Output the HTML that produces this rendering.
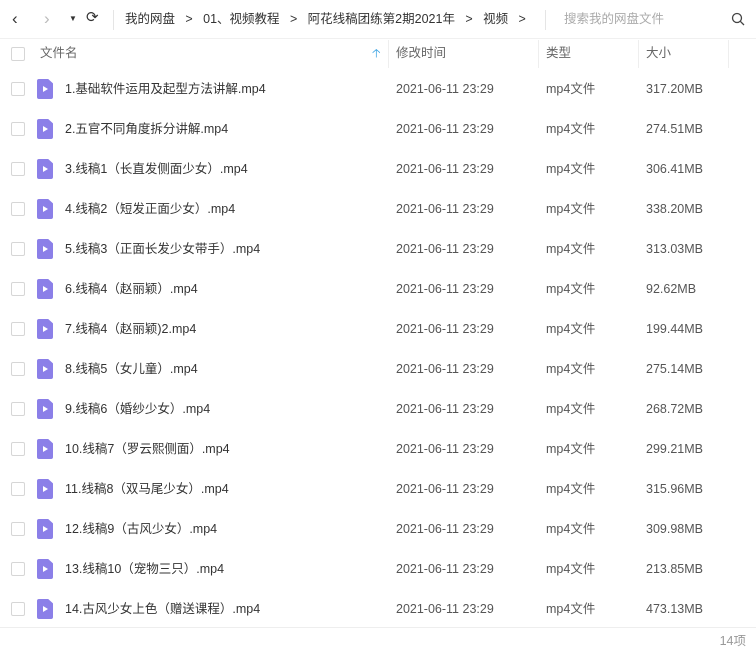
<!DOCTYPE html><html><head><meta charset="utf-8"><style>
body{margin:0;width:756px;height:660px;background:#fff;font-family:"Liberation Sans","Noto Sans CJK SC",sans-serif;color:#333;overflow:hidden;position:relative;font-size:12.5px}
.a{position:absolute;white-space:nowrap;line-height:16px}
.cb{position:absolute;left:11px;width:12px;height:12px;border:1px solid #d6d6d6;border-radius:2px;background:#fff}
.ic{position:absolute;left:37px;width:16px;height:20px;background:#8b7fe8;border-radius:2px;clip-path:polygon(0 0,70% 0,100% 22%,100% 100%,0 100%)}
.ic:after{content:"";position:absolute;left:6px;top:7px;border-left:5px solid #fff;border-top:3px solid transparent;border-bottom:3px solid transparent}
.g{color:#555}
</style></head><body>
<div class="a" style="left:12px;top:9px;font-size:17px;line-height:20px;color:#333">&#8249;</div>
<div class="a" style="left:44px;top:9px;font-size:17px;line-height:20px;color:#bbb">&#8250;</div>
<div class="a" style="left:69px;top:11px;font-size:8px">▼</div>
<div class="a" style="left:86px;top:10px;font-size:15px">&#10227;</div>
<div class="a" style="left:113px;top:10px;width:1px;height:20px;background:#e5e5e5"></div>
<div class="a" style="left:125px;top:11px;font-size:12.5px">我的网盘&nbsp;&nbsp;&nbsp;&gt;&nbsp;&nbsp;&nbsp;01、视频教程&nbsp;&nbsp;&nbsp;&gt;&nbsp;&nbsp;&nbsp;阿花线稿团练第2期2021年&nbsp;&nbsp;&nbsp;&gt;&nbsp;&nbsp;&nbsp;视频&nbsp;&nbsp;&nbsp;&gt;</div>
<div class="a" style="left:545px;top:10px;width:1px;height:20px;background:#e5e5e5"></div>
<div class="a" style="left:564px;top:11px;color:#aaa">搜索我的网盘文件</div>
<svg class="a" style="left:731px;top:12px" width="14" height="14"><circle cx="6" cy="6" r="4.5" fill="none" stroke="#444" stroke-width="1.3"/><line x1="9.3" y1="9.3" x2="13" y2="13" stroke="#444" stroke-width="1.3"/></svg>
<div class="a" style="left:0;top:38px;width:756px;height:1px;background:#f0f0f0"></div>
<div class="cb" style="top:47px"></div>
<div class="a g" style="left:40px;top:45px;color:#666">文件名</div>
<div class="a" style="left:372px;top:45px;color:#3aa3e3;font-size:12px">&#129121;</div>
<div class="a" style="left:388px;top:40px;width:1px;height:28px;background:#eee"></div>
<div class="a" style="left:396px;top:45px;color:#666">修改时间</div>
<div class="a" style="left:538px;top:40px;width:1px;height:28px;background:#eee"></div>
<div class="a" style="left:546px;top:45px;color:#666">类型</div>
<div class="a" style="left:638px;top:40px;width:1px;height:28px;background:#eee"></div>
<div class="a" style="left:646px;top:45px;color:#666">大小</div>
<div class="a" style="left:728px;top:40px;width:1px;height:28px;background:#eee"></div>
<div id="rows"></div>
<div class="a" style="left:0;top:627px;width:756px;height:1px;background:#eee"></div>
<div class="a" style="right:10px;top:633px;color:#999">14项</div>
<script>
var n=["1.基础软件运用及起型方法讲解.mp4","2.五官不同角度拆分讲解.mp4","3.线稿1（长直发侧面少女）.mp4","4.线稿2（短发正面少女）.mp4","5.线稿3（正面长发少女带手）.mp4","6.线稿4（赵丽颖）.mp4","7.线稿4（赵丽颖)2.mp4","8.线稿5（女儿童）.mp4","9.线稿6（婚纱少女）.mp4","10.线稿7（罗云熙侧面）.mp4","11.线稿8（双马尾少女）.mp4","12.线稿9（古风少女）.mp4","13.线稿10（宠物三只）.mp4","14.古风少女上色（赠送课程）.mp4"];
var s=["317.20MB","274.51MB","306.41MB","338.20MB","313.03MB","92.62MB","199.44MB","275.14MB","268.72MB","299.21MB","315.96MB","309.98MB","213.85MB","473.13MB"];
var h="";for(var i=0;i<14;i++){var c=89+40*i;
h+='<div class="cb" style="top:'+(c-7)+'px"></div><div class="ic" style="top:'+(c-10)+'px"></div><div class="a" style="left:65px;top:'+(c-8)+'px">'+n[i]+'</div><div class="a g" style="left:396px;top:'+(c-8)+'px">2021-06-11 23:29</div><div class="a g" style="left:546px;top:'+(c-8)+'px">mp4文件</div><div class="a g" style="left:646px;top:'+(c-8)+'px">'+s[i]+'</div>';}
document.getElementById("rows").innerHTML=h;
</script>
</body></html>
